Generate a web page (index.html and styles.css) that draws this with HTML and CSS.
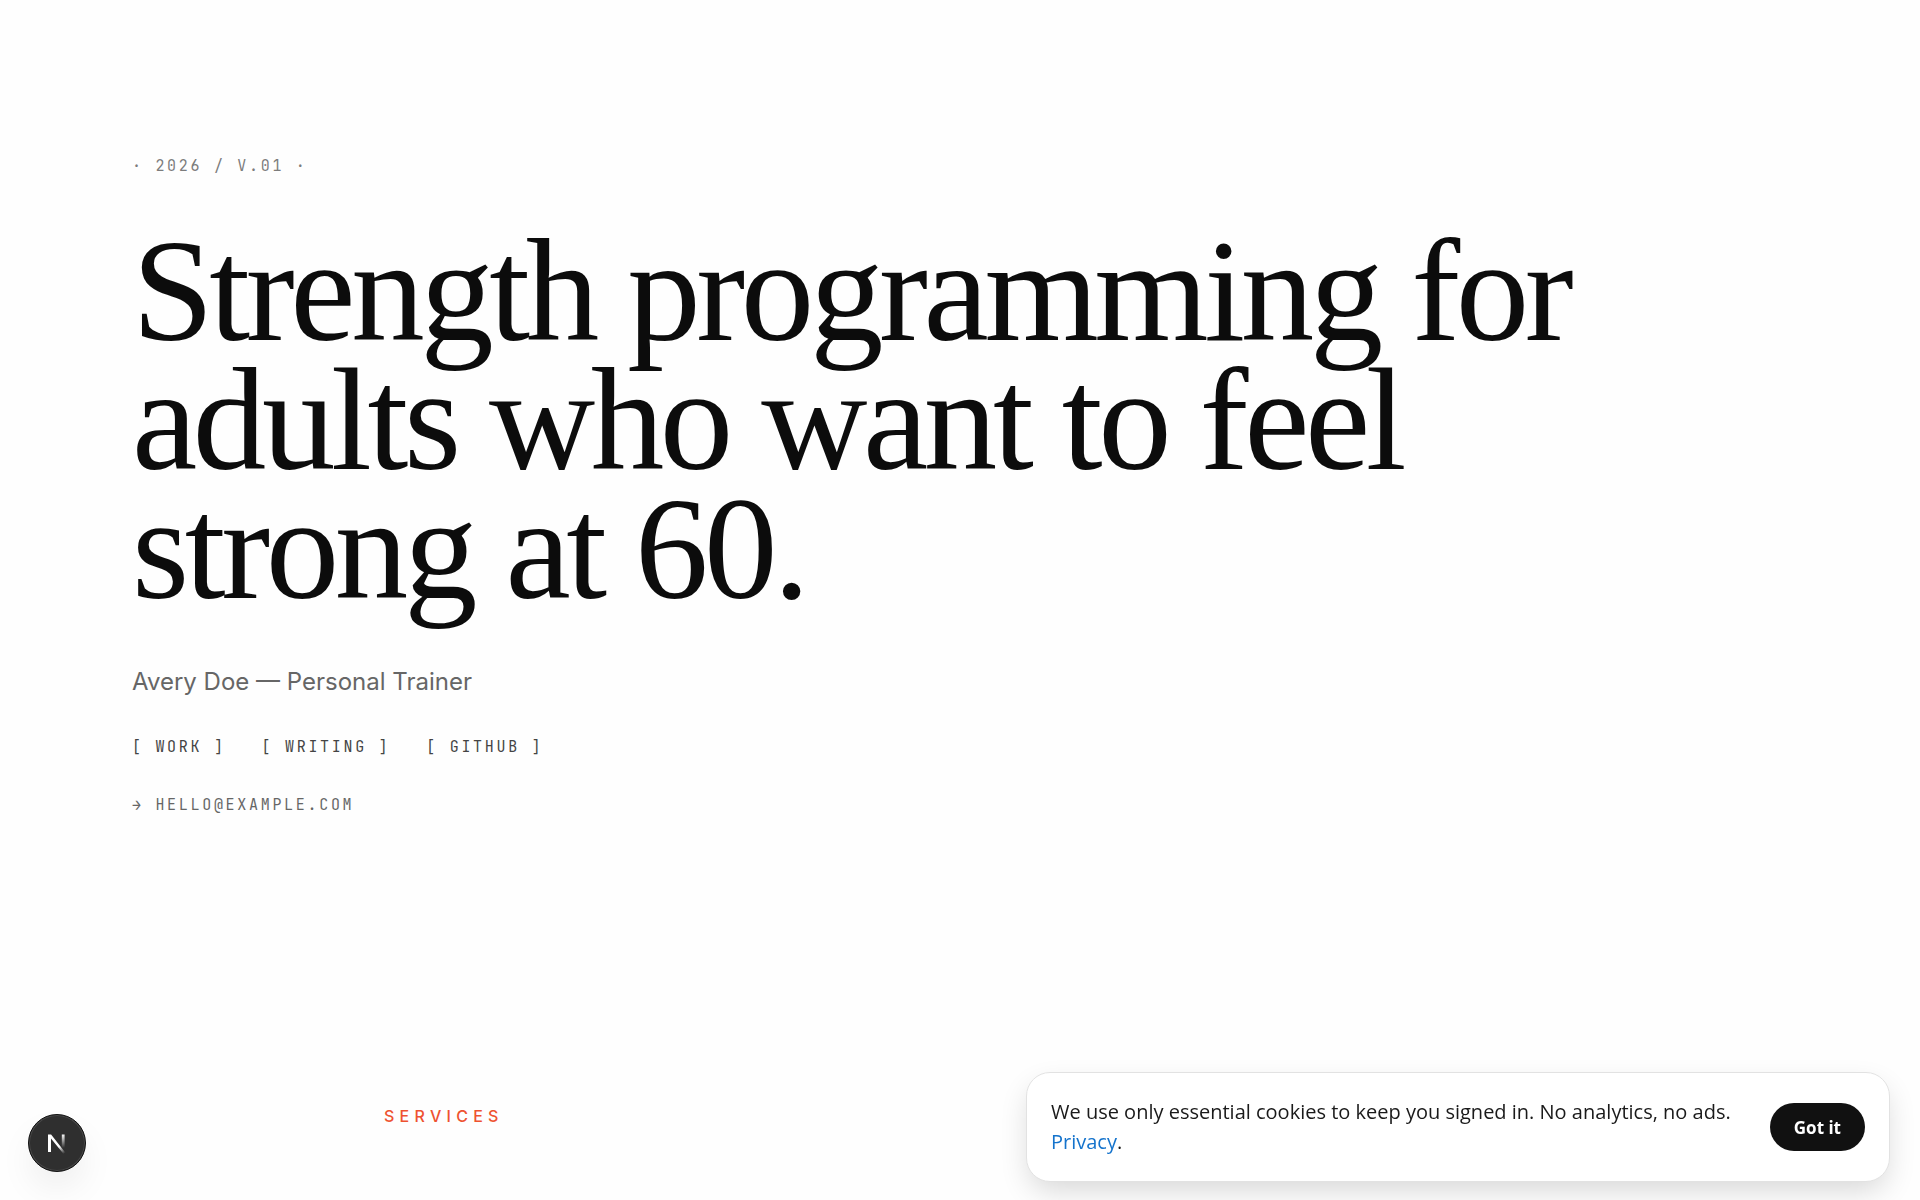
FILE: index.html
```html
<!DOCTYPE html>
<html lang="en">
<head>
  <meta charset="utf-8">
  <meta name="viewport" content="width=device-width, initial-scale=1">
  <title>Avery Doe — Personal Trainer</title>
  <link rel="stylesheet" href="styles.css">
</head>
<body>
  <main>
    <header class="hero">
      <p class="mono edition">· 2026 / V.01 ·</p>
      <h1 class="headline">Strength programming for adults who want to feel strong at 60.</h1>
      <p class="byline">Avery Doe — Personal Trainer</p>
      <nav class="links" aria-label="Main">
        <a class="mono link" href="#work">[ WORK ]</a>
        <a class="mono link" href="#writing">[ WRITING ]</a>
        <a class="mono link" href="#github">[ GITHUB ]</a>
      </nav>
      <a class="mono email" href="mailto:hello@example.com">→ HELLO@EXAMPLE.COM</a>
    </header>
    <section class="services">
      <h2 class="section-label">SERVICES</h2>
    </section>
  </main>

  <button class="dev-badge" type="button" aria-label="Open developer tools">
    <svg width="28" height="28" viewBox="0 0 28 28" fill="none" aria-hidden="true">
      <defs>
        <linearGradient id="diagonal" gradientUnits="userSpaceOnUse" x1="17" y1="17" x2="22" y2="24">
          <stop stop-color="#fff"/>
          <stop offset="1" stop-color="#fff" stop-opacity="0"/>
        </linearGradient>
        <linearGradient id="stem" gradientUnits="userSpaceOnUse" x1="20" y1="5" x2="20" y2="19">
          <stop stop-color="#fff"/>
          <stop offset="1" stop-color="#fff" stop-opacity="0"/>
        </linearGradient>
      </defs>
      <path d="M5 23V5.5H8.1L23 24.4L21.2 25.8L8 9.6V23Z" fill="url(#diagonal)"/>
      <path d="M18.8 5.5H21.6V19H18.8Z" fill="url(#stem)"/>
    </svg>
  </button>

  <aside class="cookies" aria-label="Cookie notice">
    <p class="cookies-text">We use only essential cookies to keep you signed in. No analytics, no ads. <a class="privacy" href="#privacy">Privacy</a>.</p>
    <button class="accept" type="button">Got it</button>
  </aside>
</body>
</html>
```
FILE: styles.css
```css
* {
  box-sizing: border-box;
}

body {
  margin: 0;
  background: #fefefe;
  color: #0c0c0c;
  font-family: Inter, sans-serif;
}

h1,
h2,
p {
  margin: 0;
}

a {
  text-decoration: none;
}

.hero {
  display: flex;
  flex-direction: column;
  align-items: flex-start;
  padding: 154px 132px 287px;
}

.mono {
  font-family: "JetBrains Mono", "DejaVu Sans Mono", monospace;
  font-size: 15px;
  line-height: 24px;
  letter-spacing: 0.18em;
}

.edition {
  color: #7c7c7c;
}

.headline {
  max-width: 1500px;
  margin-top: 48px;
  font-family: Georgia, "Liberation Serif", serif;
  font-size: 147px;
  font-weight: 400;
  line-height: 129px;
  letter-spacing: -0.03em;
}

.byline {
  margin-top: 51px;
  color: #666;
  font-size: 24px;
  line-height: 36px;
}

.links {
  display: flex;
  flex-wrap: wrap;
  gap: 36px;
  margin-top: 35px;
}

.link {
  color: #444;
}

.email {
  margin-top: 34px;
  color: #666;
}

.services {
  max-width: 1152px;
  margin: 0 auto;
  padding-bottom: 72px;
}

.section-label {
  color: #ee5230;
  font-size: 16px;
  font-weight: 500;
  line-height: 24px;
  letter-spacing: 0.33em;
}

.dev-badge {
  position: fixed;
  left: 28px;
  bottom: 28px;
  display: flex;
  align-items: center;
  justify-content: center;
  width: 58px;
  height: 58px;
  padding: 0;
  border: 1px solid #111;
  border-radius: 50%;
  background: #2f2f2f;
  box-shadow: inset 0 0 0 1px #494949, 0 18px 36px -4px rgba(0, 0, 0, 0.08);
}

.cookies {
  position: fixed;
  right: 30px;
  bottom: 18px;
  display: flex;
  align-items: center;
  justify-content: space-between;
  gap: 24px;
  width: 864px;
  max-width: calc(100% - 60px);
  padding: 24px;
  border: 1px solid #e2e2e2;
  border-radius: 24px;
  background: #fff;
  box-shadow: 0 12px 30px -4px rgba(0, 0, 0, 0.16);
  font-family: "Segoe UI", "Open Sans", sans-serif;
}

.cookies-text {
  color: #1a1a1a;
  font-size: 20px;
  line-height: 30px;
}

.privacy {
  color: #1473cc;
}

.accept {
  flex: none;
  height: 48px;
  padding: 0 24px;
  border: 0;
  border-radius: 24px;
  background: #111;
  color: #fff;
  font-family: inherit;
  font-size: 17px;
  font-weight: 700;
}
```
